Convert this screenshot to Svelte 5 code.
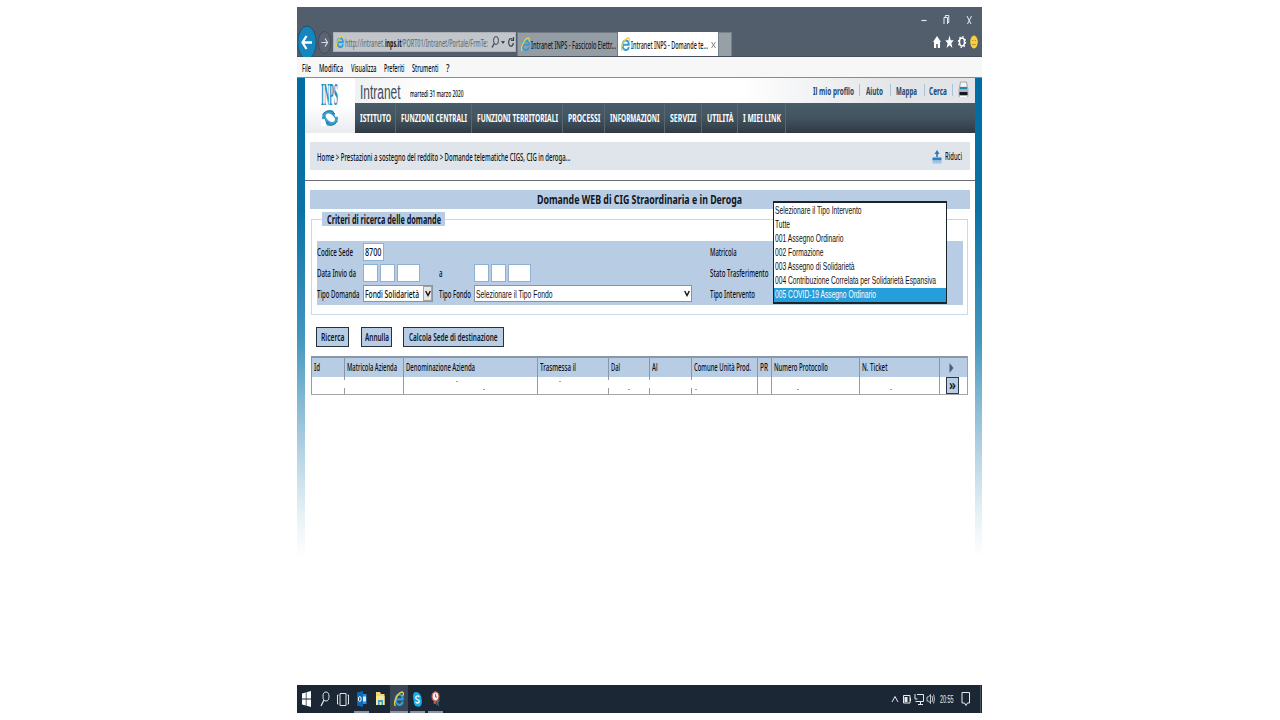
<!-- App.svelte -->
<script>
  const menu = [
    { text: "File", w: 9, gap: 8 },
    { text: "Modifica", w: 24, gap: 7.5 },
    { text: "Visualizza", w: 25.5, gap: 8 },
    { text: "Preferiti", w: 20.5, gap: 7.5 },
    { text: "Strumenti", w: 26.5, gap: 7.5 },
    { text: "?", w: 3.5, gap: 0 },
  ];

  const links = [
    { text: "Il mio profilo", w: 41, before: 0, after: 5 },
    { text: "Aiuto", w: 17, before: 6, after: 7 },
    { text: "Mappa", w: 21, before: 5, after: 7 },
    { text: "Cerca", w: 18, before: 4, after: 5 },
  ];

  const nav = [
    { text: "ISTITUTO", w: 31, cell: 41 },
    { text: "FUNZIONI CENTRALI", w: 66, cell: 76 },
    { text: "FUNZIONI TERRITORIALI", w: 81, cell: 91 },
    { text: "PROCESSI", w: 32.5, cell: 42.5 },
    { text: "INFORMAZIONI", w: 49.5, cell: 59.5 },
    { text: "SERVIZI", w: 26.5, cell: 37 },
    { text: "UTILITÀ", w: 26.5, cell: 36 },
    { text: "I MIEI LINK", w: 38, cell: 48 },
  ];

  const options = [
    { text: "Selezionare il Tipo Intervento", w: 86.5 },
    { text: "Tutte", w: 15 },
    { text: "001 Assegno Ordinario", w: 68.5 },
    { text: "002 Formazione", w: 48.5 },
    { text: "003 Assegno di Solidarietà", w: 79.5 },
    { text: "004 Contribuzione Correlata per Solidarietà Espansiva", w: 161 },
    { text: "005 COVID-19 Assegno Ordinario", w: 101 },
  ];
  let selected = $state(6);

  const columns = [
    { text: "Id", w: 6, cell: 33, marks: [] },
    { text: "Matricola Azienda", w: 50, cell: 58.5, broken: true, marks: [] },
    { text: "Denominazione Azienda", w: 69, cell: 134, marks: [[53, 4], [80, 12]] },
    { text: "Trasmessa il", w: 36, cell: 71.5, marks: [[22, 4]] },
    { text: "Dal", w: 9, cell: 41, broken: true, marks: [[20, 12]] },
    { text: "Al", w: 5.5, cell: 41.5, broken: true, marks: [] },
    { text: "Comune Unità Prod.", w: 57, cell: 66.5, broken: true, marks: [[4, 12]] },
    { text: "PR", w: 8, cell: 14, marks: [] },
    { text: "Numero Protocollo", w: 54, cell: 87.5, marks: [[26, 12]] },
    { text: "N. Ticket", w: 25.5, cell: 80, marks: [[31, 12]] },
  ];

  // squeeze a line of text horizontally so it fills the given width
  function fit(node, width) {
    const natural = node.getBoundingClientRect().width;
    node.style.transform = `scaleX(${width / natural})`;
  }
</script>

{#snippet t(text, w, cls = "")}
  <span class="fit {cls}" style="width: {w}px"><span class="fit-in" use:fit={w}>{text}</span></span>
{/snippet}

{#snippet ie(w, h)}
  <svg width={w} height={h} viewBox="0 0 20 30" preserveAspectRatio="none">
    <path d="M17.500 20C15 29 4 28 3.500 16C4 4 17 4 17.500 15.500H5" fill="none" stroke="#2f9fdc" stroke-width="4.200" />
    <path d="M3 28C-3 22 8 2 17 2C19.500 3 19 7 17.500 9" fill="none" stroke="#ecd044" stroke-width="2.600" />
  </svg>
{/snippet}

<main class="window">
  <div class="titlebar">
    <svg width="56" height="14" viewBox="0 0 56 14" fill="none" stroke="#e8ecef">
      <path d="M1.500 7.500h5" stroke-width="1.200" />
      <path d="M24 4.500h3.500v7H24zM25.300 4.500v-2h3.500v7h-1.300" />
      <path d="M47 3l4.500 9M51.500 3l-4.500 9" />
    </svg>
  </div>

  <div class="toolbar">
    <svg class="history" width="36" height="33" viewBox="0 0 36 33">
      <ellipse cx="10" cy="18.500" rx="9.300" ry="16.500" fill="#1585bd" stroke="#24516f" />
      <path d="M15 18.500H5.500M9.500 12l-4 6.500 4 6.500" fill="none" stroke="#fff" stroke-width="2.300" />
      <ellipse cx="27.500" cy="18.500" rx="6.300" ry="11" fill="#5a6472" stroke="#434c59" />
      <path d="M24.500 18.500h6M28 14.500l2.500 4-2.500 4" fill="none" stroke="#d9dde0" stroke-width="1.200" />
    </svg>
    <div class="address">
      {@render ie(8, 14)}
      <span class="url">
        {@render t("http://intranet.", 39.5)}{@render t("inps.it", 16.5, "host")}{@render t("/PORT01/Intranet/Portale/FrmTe:", 87)}
      </span>
      <svg width="24" height="14" viewBox="0 0 24 14" fill="none" stroke="#3b4550">
        <ellipse cx="5" cy="5.500" rx="2.500" ry="4" />
        <path d="M3.300 8.500L1 12.500" stroke-width="1.300" />
        <path d="M10 6h4l-2 3z" fill="#3b4550" stroke="none" />
        <path d="M21.500 4.500C19 2 17.500 5 17.700 8C18 12 21.500 12.500 22.500 8M20 5.500h2.500V2" stroke-width="1.200" />
      </svg>
    </div>
    <div class="tab">
      {@render ie(9, 15)}
      {@render t("Intranet INPS - Fascicolo Elettr...", 85)}
    </div>
    <div class="tab active">
      {@render ie(9, 15)}
      {@render t("Intranet INPS - Domande te...", 77)}
      <svg class="close" width="5" height="8" viewBox="0 0 5 8"><path d="M.5 1l4 6M4.500 1l-4 6" stroke="#858585" /></svg>
    </div>
    <div class="newtab"></div>
    <svg class="tools" width="46" height="16" viewBox="0 0 46 16">
      <path d="M0 8L4 2l4 6H7v6H4.800v-4H3.200v4H1V8z" fill="#fff" />
      <path d="M16.500 1.500l1.200 4.800h3l-2.300 3 1 4.800-2.900-2.900-2.900 2.900 1-4.800-2.300-3h3z" fill="#fff" />
      <ellipse cx="29" cy="8" rx="2.500" ry="3.900" fill="none" stroke="#fff" stroke-width="1.500" />
      <ellipse cx="29" cy="8" rx="3.500" ry="5.300" fill="none" stroke="#fff" stroke-dasharray="1.600 1.850" stroke-width="1.300" />
      <ellipse cx="41" cy="8" rx="3.800" ry="6.500" fill="#f4cf3e" />
      <path d="M39 6.500h1.300M41.700 6.500H43M39 10.500h4" stroke="#c09a28" fill="none" />
    </svg>
  </div>

  <div class="menubar">
    {#each menu as item}
      <span class="menu-item" style="margin-right: {item.gap}px">{@render t(item.text, item.w)}</span>
    {/each}
  </div>

  <div class="page">
    <div class="content">
      <header>
        <div class="logo">
          {@render t("INPS", 17, "inps")}
          <svg width="18" height="18" viewBox="0 0 18 18">
            <ellipse cx="9" cy="9" rx="8" ry="8" fill="#3a9fc8" />
            <ellipse cx="9.300" cy="8.700" rx="3.300" ry="5.400" transform="rotate(-50 9.300 8.700)" fill="#fff" />
            <path d="M0 10.500l3.500-.5 2.500 7H0zM17.500 7.500l-3 .5-2.500-7h5.500z" fill="#fff" />
            <path d="M1.500 5.500C5 1 11 1 14 5l-3-.5M16.500 12C13 17 8 17 5 13.500l3 .2" stroke="#1d7fb0" fill="none" />
          </svg>
        </div>
        <div class="head-right">
          <div class="brand">
            {@render t("Intranet", 40.5, "intranet")}
            {@render t("martedì 31 marzo 2020", 53.5, "date")}
            <div class="links">
              {#each links as link}
                <a href="#top" style="padding-left: {link.before}px; padding-right: {link.after}px">{@render t(link.text, link.w)}</a>
              {/each}
              <svg width="11" height="18" viewBox="0 0 11 18">
                <path d="M2.500 1h6l1 6h-8z" fill="#f5f5f5" stroke="#8c9297" stroke-width=".8" />
                <rect x="0.500" y="7" width="10" height="9" rx="1" fill="#b0b4b8" />
                <path d="M2 7h7" stroke="#2682bd" stroke-width="2.200" />
                <rect x="1.500" y="11" width="8" height="3" fill="#14191e" />
                <path d="M2 15.500h7" stroke="#fff" />
              </svg>
            </div>
          </div>
          <nav>
            {#each nav as item}
              <div class="nav-item" style="width: {item.cell}px">{@render t(item.text, item.w)}</div>
            {/each}
          </nav>
        </div>
      </header>

      <div class="crumbs">
        {@render t("Home > Prestazioni a sostegno del reddito > Domande telematiche CIGS, CIG in deroga...", 253.5)}
        <div class="reduce">
          <svg width="10" height="14" viewBox="0 0 10 14">
            <path d="M5 0l2.500 4H5.800v3H4.200V4H2.500z" fill="#2b76b8" />
            <rect x="0.500" y="7.500" width="9" height="3" fill="#2d7fc1" />
            <rect x="0.500" y="10.500" width="9" height="3" fill="#9cc4e4" />
          </svg>
          {@render t("Riduci", 17)}
        </div>
      </div>
      <div class="rule"></div>

      <h1>{@render t("Domande WEB di CIG Straordinaria e in Deroga", 205)}</h1>

      <section class="criteria">
        <h2>{@render t("Criteri di ricerca delle domande", 114)}</h2>
        <div class="panel">
          <div class="row">
            <div class="label">{@render t("Codice Sede", 36)}</div>
            <div class="field"><div class="input sede">{@render t("8700", 16.5)}</div></div>
            <div></div>
            <div></div>
            <div class="label">{@render t("Matricola", 26.5)}</div>
          </div>
          <div class="row">
            <div class="label">{@render t("Data Invio da", 39)}</div>
            <div class="field">
              <div class="input day"></div>
              <div class="input day"></div>
              <div class="input year"></div>
            </div>
            <div class="label">{@render t("a", 3.5)}</div>
            <div class="field">
              <div class="input day"></div>
              <div class="input day"></div>
              <div class="input year"></div>
            </div>
            <div class="label">{@render t("Stato Trasferimento", 58.5)}</div>
          </div>
          <div class="row">
            <div class="label">{@render t("Tipo Domanda", 42.5)}</div>
            <div class="field">
              <div class="select domanda">
                {@render t("Fondi Solidarietà", 54)}
                <div class="arrow boxed">
                  <svg width="6" height="7" viewBox="0 0 6 7"><path d="M.7 1L3 5.500 5.300 1" fill="none" stroke="#111" stroke-width="1.400" /></svg>
                </div>
              </div>
            </div>
            <div class="label">{@render t("Tipo Fondo", 32)}</div>
            <div class="field">
              <div class="select fondo">
                {@render t("Selezionare il Tipo Fondo", 76.5, "arial")}
                <div class="arrow">
                  <svg width="6" height="7" viewBox="0 0 6 7"><path d="M.7 1L3 5.500 5.300 1" fill="none" stroke="#111" stroke-width="1.400" /></svg>
                </div>
              </div>
            </div>
            <div class="label">{@render t("Tipo Intervento", 45)}</div>
          </div>
          <div class="dropdown">
            {#each options as option, i}
              <button class="option" class:on={i === selected} onclick={() => (selected = i)}>{@render t(option.text, option.w)}</button>
            {/each}
          </div>
        </div>
      </section>

      <div class="actions">
        <button class="act ricerca">{@render t("Ricerca", 23.5)}</button>
        <button class="act annulla">{@render t("Annulla", 24)}</button>
        <button class="act calcola">{@render t("Calcola Sede di destinazione", 88.5)}</button>
      </div>

      <div class="grid">
        <div class="grid-head">
          {#each columns as col}
            <div class="th" style="width: {col.cell}px">{@render t(col.text, col.w)}</div>
          {/each}
          <div class="th last">
            <svg width="5" height="10" viewBox="0 0 5 10"><path d="M.5 0L4.500 5 .5 10z" fill="#46617f" /></svg>
          </div>
        </div>
        <div class="grid-row">
          {#each columns as col}
            <div class="td" class:broken={col.broken} style="width: {col.cell}px">
              <svg width="100%" height="17">
                {#each col.marks as [x, y]}
                  <rect {x} {y} width="2" height="1" fill="#a3a3a3" />
                {/each}
              </svg>
            </div>
          {/each}
          <div class="td last">
            <button class="more">{@render t("»", 7)}</button>
          </div>
        </div>
      </div>
    </div>
  </div>

  <footer>
    <div class="task">
      <svg width="9" height="16" viewBox="0 0 9 16" fill="#fff"><path d="M0 2.500L3.800 1.500v6H0zM4.500 1.300L9 0v7.500H4.500zM0 8.500h3.800v6L0 13.500zM4.500 8.500H9V16l-4.500-1.300z" /></svg>
    </div>
    <div class="task">
      <svg width="10" height="16" viewBox="0 0 10 16" fill="none" stroke="#e4e8ec"><ellipse cx="6" cy="5.500" rx="3" ry="4.500" /><path d="M4 9L1 15" stroke-width="1.300" /></svg>
    </div>
    <div class="task">
      <svg width="12" height="15" viewBox="0 0 12 15" fill="none" stroke="#dfe4e8"><path d="M3 1.500h6v12H3zM1.500 3H.5v9h1M10.500 3h1v9h-1" /></svg>
    </div>
    <div class="task open">
      <svg width="10" height="16" viewBox="0 0 10 16">
        <path d="M5 3h4.500v10H5z" fill="#2c8bd8" /><path d="M6 5.500h3v5H6z" fill="#dcecf8" />
        <path d="M0 1.500L6 0v16L0 14.500z" fill="#0c67b5" />
        <ellipse cx="2.800" cy="8" rx="1.400" ry="2.500" fill="none" stroke="#fff" />
      </svg>
    </div>
    <div class="task">
      <svg width="10" height="14" viewBox="0 0 10 14"><path d="M1 0h4l1 2h3.500v11H1z" fill="#f3d777" /><path d="M1 4h8.500v9H1z" fill="#fbe698" /><path d="M3 13V8h5v5H6.500v-3h-2v3z" fill="#37a0c9" /></svg>
    </div>
    <div class="task current open">{@render ie(10, 16)}</div>
    <div class="task open">
      <svg width="9" height="15" viewBox="0 0 9 15">
        <path d="M3 0C6 0 8.500 3 8.500 7C10 12 7 16 5 14.500C2 15 .5 12 .6 8C-.5 4 0 0 3 0z" fill="#19aee8" />
        <path d="M6.300 5C5 3 2.500 4 2.800 6C3 8 6.300 7 6.300 9.300C6.200 11.500 3.500 11.500 2.500 9.700" fill="none" stroke="#fff" stroke-width="1.300" />
      </svg>
    </div>
    <div class="task open">
      <svg width="10" height="16" viewBox="0 0 10 16">
        <path d="M6 9l1.500 6M8.500 9l-3 5" stroke="#3a78a8" />
        <ellipse cx="4.500" cy="5.500" rx="3.500" ry="4.700" fill="#f3eeee" stroke="#bc5a4c" stroke-width="1.200" />
        <path d="M4.500 3v3h1.500" stroke="#777" fill="none" />
        <circle cx="4" cy="11.500" r="1.500" fill="#c8554a" />
      </svg>
    </div>
    <div class="tray">
      <svg width="77" height="18" viewBox="0 0 77 18" fill="none" stroke="#e6eaed">
        <path d="M1 12L4 6.500 7 12" />
        <path d="M12.500 5.500h6.500v7.500h-6.500zM19.500 8v3" /><path d="M13.500 7h3v5h-3z" fill="#e6eaed" stroke="none" />
        <path d="M26 4.500h6.500v7H24.500M24 4v5h2.500M27 14.500h5M29.500 12v2" />
        <path d="M36 7h1.500l2-2.500v9l-2-2.500H36zM41 6q1.200 3 0 6M42.600 4.500q1.700 4.500 0 9" stroke-width=".8" />
      </svg>
      {@render t("20:55", 13.5, "clock")}
      <svg class="notify" width="10" height="16" viewBox="0 0 10 16" fill="none" stroke="#e6eaed"><path d="M1 1.500h7.500v10.500H6.500L5 14.500 3.500 12H1z" /></svg>
      <div class="desktop"></div>
    </div>
  </footer>
</main>

<style>
  :global(body) {
    background: #fff;
  }

  .window,
  .window * {
    box-sizing: border-box;
  }

  .window {
    width: 685px;
    height: 706px;
    margin: 7px 0 0 297px;
    display: flex;
    flex-direction: column;
    overflow: hidden;
    font-family: "Noto Sans", sans-serif;
    font-size: 10.5px;
    font-weight: 500;
    line-height: 14px;
    color: #0c1015;
  }

  .window svg {
    display: block;
    flex: none;
  }

  .fit {
    display: block;
    flex: none;
    white-space: pre;
  }

  .fit-in {
    display: inline-block;
    transform-origin: 0 50%;
  }

  .titlebar {
    height: 17px;
    padding: 6px 6px 0 0;
    display: flex;
    justify-content: flex-end;
    background: #525e6c;
  }

  .toolbar {
    height: 33px;
    display: flex;
    align-items: flex-end;
    background: #525e6c;
    border-bottom: 1px solid #454e59;
  }

  .history {
    align-self: flex-start;
  }

  .address {
    width: 183px;
    height: 20px;
    margin-bottom: 4px;
    padding-left: 2px;
    display: flex;
    align-items: center;
    background: #c2c6ca;
    border: 1px solid #aab0b6;
  }

  .url {
    display: flex;
    width: 145px;
    margin: 2px 2px 0 1px;
    font-size: 11px;
    color: #6c7278;
  }

  .url :global(.host) {
    color: #111;
    font-weight: 700;
  }

  .tab {
    width: 101px;
    height: 24px;
    margin-left: 1px;
    padding-left: 3px;
    display: flex;
    align-items: center;
    gap: 1px;
    background: #959da4;
    border: 1px solid #707a84;
    border-bottom: 0;
    font-size: 11px;
    color: #15191d;
  }

  .active {
    width: 100px;
    margin-left: 0;
    padding-left: 2px;
    background: #fff;
    border-color: #fff;
  }

  .close {
    margin-left: 2px;
  }

  .newtab {
    width: 13.500px;
    height: 24px;
    background: #98a0a7;
    border: 1px solid #77818a;
    border-bottom: 0;
  }

  .tools {
    margin: 0 3px 6px auto;
  }

  .menubar {
    height: 21px;
    padding: 1px 0 0 5px;
    display: flex;
    align-items: center;
    background: #f7f7f7;
    border-bottom: 1px solid #8b8b8b;
    font-size: 11px;
  }

  .page {
    height: 607px;
    padding: 0 7.500px;
    background: linear-gradient(#006ca2, #0a73a6 22%, #4397bf 43%, #7db5d0 52%, #b6d4e4 62%, #e8f1f6 72%, #fff 79%);
  }

  .content {
    height: 607px;
    background: #fff;
  }

  header {
    height: 55px;
    display: flex;
  }

  .logo {
    width: 50px;
    padding: 3px 0 0 16px;
    background: linear-gradient(#fff 50%, #e9ebee);
  }

  .logo :global(.inps) {
    height: 27px;
    font: 700 31px/27px "Liberation Serif", serif;
    color: #168fbe;
  }

  .logo svg {
    margin-top: 1px;
  }

  .head-right {
    flex: 1;
  }

  .brand {
    height: 24.500px;
    padding: 0 6px 0 5px;
    display: flex;
    align-items: center;
    background: linear-gradient(90deg, #f0f1f3, #fff 12%, #fff 62%, #e2e4e7 88%);
  }

  .brand :global(.intranet) {
    margin-top: 3px;
    font: 20.5px/22px "Liberation Sans", sans-serif;
    color: #3d4b59;
  }

  .brand :global(.date) {
    margin: 8px 0 0 9.500px;
    font-size: 8.5px;
    color: #000;
  }

  .links {
    margin-left: auto;
    display: flex;
    align-items: center;
    font-weight: 700;
  }

  .links a {
    height: 12px;
    line-height: 14px;
    color: #24486e;
    text-decoration: none;
    border-right: 1px solid #a9c3d8;
  }

  .links svg {
    margin-left: 5px;
  }

  nav {
    height: 30.500px;
    display: flex;
    background: linear-gradient(#485d69, #42545f 50%, #2e3a43);
    color: #fff;
    font-weight: 700;
    font-size: 10px;
  }

  .nav-item {
    padding: 8px 0 0 5px;
    border-right: 1px solid #566872;
  }

  .crumbs {
    height: 28px;
    margin: 9px 5px 0 5px;
    padding: 1px 7.500px 0 7px;
    display: flex;
    align-items: center;
    justify-content: space-between;
    background: #e0e5eb;
  }

  .reduce {
    display: flex;
    gap: 3px;
    line-height: 13px;
  }

  .rule {
    margin-top: 10px;
    border-top: 1px solid #6c6c70;
  }

  h1 {
    height: 19px;
    margin: 9px 5px 0 5px;
    padding-left: 227.500px;
    background: #b8cce4;
    font-size: 12.5px;
    line-height: 20px;
    font-weight: 700;
    color: #10151c;
  }

  .criteria {
    height: 96px;
    margin: 10px 7px 0 6px;
    border: 1px solid #c6dbea;
  }

  h2 {
    width: 123px;
    height: 14px;
    margin: -8px 0 0 10px;
    padding-left: 5px;
    background: #b8cce4;
    font-size: 11.5px;
    line-height: 15px;
    font-weight: 700;
    color: #10151c;
  }

  .panel {
    position: relative;
    height: 64px;
    margin: 15px 4px 0 5px;
    background: #b8cce4;
  }

  .row {
    height: 21px;
    display: grid;
    grid-template-columns: 46.500px 75.500px 35.500px 236px 1fr;
    align-items: center;
  }

  .field {
    display: flex;
    gap: 2px;
  }

  .input {
    height: 18px;
    background: #fff;
    border: 1px solid #8fb0d0;
  }

  .sede {
    width: 20.500px;
    padding: 1px 0 0 1px;
    font-size: 11px;
  }

  .day {
    width: 15px;
  }

  .year {
    width: 22.500px;
  }

  .select {
    height: 16.500px;
    padding-left: 1px;
    display: flex;
    align-items: center;
    justify-content: space-between;
    background: #fff;
    border: 1px solid #8796a6;
  }

  .domanda {
    width: 70px;
    padding-left: .5px;
    font-size: 11px;
  }

  .fondo {
    width: 218px;
  }

  .select :global(.arial) {
    font: 11.5px/14px "Liberation Sans", sans-serif;
  }

  .arrow {
    width: 9px;
    height: 14.500px;
    display: flex;
    align-items: center;
    justify-content: center;
  }

  .boxed {
    background: #e6e6e6;
    border: 1px solid #a3a3a3;
  }

  .dropdown {
    position: absolute;
    left: 456.500px;
    top: -40px;
    width: 174px;
    height: 103px;
    background: #fff;
    border: 1px solid #1a222c;
    border-top-width: 2px;
    border-bottom-width: 2px;
  }

  .option {
    display: block;
    width: 100%;
    height: 14.100px;
    padding: 0 0 0 1px;
    border: 0;
    background: none;
    text-align: left;
    font: 11.5px/13px "Liberation Sans", sans-serif;
    color: #111;
  }

  .option.on {
    background: #259ed9;
    color: #fff;
  }

  .actions {
    margin: 12px 0 0 11.500px;
    display: flex;
  }

  .act {
    height: 20px;
    padding: 0 0 0 4px;
    background: #b8cce4;
    border: 1px solid #26313e;
    border-right-width: 1.500px;
    font: 600 11px/16px "Noto Sans", sans-serif;
    color: #10151c;
    text-align: left;
  }

  .ricerca {
    width: 33px;
  }

  .annulla {
    width: 31px;
    margin-left: 12px;
    padding-left: 2.500px;
  }

  .calcola {
    width: 101px;
    margin-left: 11px;
    padding-left: 5px;
  }

  .grid {
    width: 656.500px;
    margin: 9px 0 0 6.500px;
    border-right: 1px solid #98a2ad;
  }

  .grid-head {
    height: 20.500px;
    display: flex;
    background: #b8cce4;
    border-top: 2px solid #8797a8;
  }

  .th {
    padding: 2px 0 0 2px;
    border-left: 1px solid #8796a8;
    font-size: 10px;
  }

  .last {
    flex: 1;
  }

  .th.last {
    padding: 5px 0 0 9px;
  }

  .grid-row {
    height: 18px;
    display: flex;
    border-bottom: 1px solid #a5a5a5;
  }

  .td {
    background: linear-gradient(#9a9a9a, #9a9a9a) 0 0 / 1px 100% no-repeat;
  }

  .td.broken {
    background: linear-gradient(#9a9a9a 3px, #fff 3px, #fff 11px, #9a9a9a 11px) 0 0 / 1px 100% no-repeat;
  }

  .td.last {
    padding-left: 7.500px;
  }

  .more {
    display: block;
    width: 12.500px;
    height: 17px;
    padding: 0 0 0 2px;
    background: #b8cce4;
    border: 1px solid #2c3846;
    font: 600 14px/12px "Noto Sans", sans-serif;
    color: #10151c;
    text-align: left;
  }

  footer {
    height: 28px;
    display: flex;
    background: #1b2735;
  }

  .task {
    width: 18.500px;
    height: 28px;
    padding-top: 2px;
    display: flex;
    align-items: center;
    justify-content: center;
    border-bottom: 2px solid transparent;
    background-clip: padding-box;
  }

  .open {
    width: 15px;
    margin: 0 1.750px;
    border-bottom-color: #8794a3;
  }

  .current {
    width: 18px;
    margin: 0 .25px;
    background-color: #3a4654;
  }

  .tray {
    margin-left: auto;
    display: flex;
    align-items: center;
  }

  .tray svg:first-child {
    margin-right: -28px;
  }

  .tray :global(.clock) {
    font: 11px/14px "Liberation Sans", sans-serif;
    color: #e6eaed;
  }

  .notify {
    margin: 0 8.500px 0 8px;
  }

  .desktop {
    width: 2.500px;
    height: 28px;
    border-left: 1px solid #475361;
  }
</style>
